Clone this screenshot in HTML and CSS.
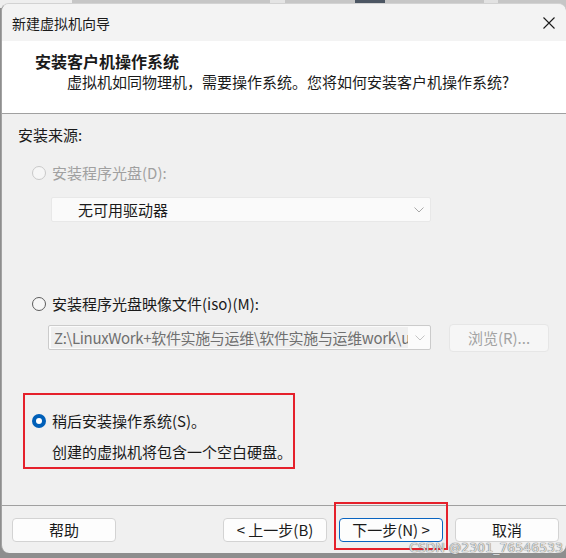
FILE: index.html
```html
<!DOCTYPE html>
<html lang="zh-CN">
<head>
<meta charset="utf-8">
<title>新建虚拟机向导</title>
<link rel="stylesheet" href="styles.css">
</head>
<body>
<div class="desktop">
  <div class="window">
    <div class="titlebar">
      <span class="title">新建虚拟机向导</span>
      <svg class="close" width="12" height="12" viewBox="0 0 12 12"><path d="M0.5 0.5 L11.5 11.5 M11.5 0.5 L0.5 11.5" stroke="#1b1b1b" stroke-width="1.1" fill="none"/></svg>
    </div>
    <div class="header">
      <div class="h-title">安装客户机操作系统</div>
      <div class="h-sub">虚拟机如同物理机，需要操作系统。您将如何安装客户机操作系统?</div>
    </div>
    <div class="body">
      <div class="label">安装来源:</div>
      <div class="radio-row disabled first">
        <span class="radio off-disabled"></span>
        <span>安装程序光盘(D):</span>
      </div>
      <div class="combo combo1">
        <span class="combo-text">无可用驱动器</span>
        <svg class="chev" width="10" height="6" viewBox="0 0 10 6"><path d="M0.5 0.5 L5 5 L9.5 0.5" stroke="#a9a9a9" stroke-width="1" fill="none"/></svg>
      </div>
      <div class="radio-row second">
        <span class="radio off"></span>
        <span>安装程序光盘映像文件(iso)(M):</span>
      </div>
      <div class="iso-row">
        <div class="combo combo2">
          <span class="combo-edit">Z:\LinuxWork+软件实施与运维\软件实施与运维work\u</span>
          <svg class="chev" width="10" height="6" viewBox="0 0 10 6"><path d="M0.5 0.5 L5 5 L9.5 0.5" stroke="#c4c4c4" stroke-width="1" fill="none"/></svg>
        </div>
        <div class="browse">浏览(R)...</div>
      </div>
      <div class="later">
        <div class="radio-row">
          <span class="radio on"></span>
          <span>稍后安装操作系统(S)。</span>
        </div>
        <div class="later-note">创建的虚拟机将包含一个空白硬盘。</div>
      </div>
    </div>
    <div class="footer">
      <div class="btn">帮助</div>
      <div class="spacer"></div>
      <div class="btn">&lt; 上一步(B)</div>
      <div class="btn primary">下一步(N) &gt;</div>
      <div class="btn">取消</div>
      <div class="mark"></div>
    </div>
  </div>
  <div class="watermark">CSDN @2301_76546533</div>
</div>
</body>
</html>
```

FILE: styles.css
```css
* { box-sizing: border-box; }
html, body { margin: 0; padding: 0; }
body {
  width: 566px;
  height: 558px;
  overflow: hidden;
  font-family: "Noto Sans CJK SC", "Noto Sans", sans-serif;
  color: #1a1a1a;
  background: #8e8e8e;
}
.desktop {
  position: relative;
  width: 566px;
  height: 558px;
  padding-top: 3px;
  background:
    linear-gradient(to right,
      #eeeeee 0, #eeeeee 72px,
      #c6c6c6 72px, #c6c6c6 270px,
      #e4e4e4 270px, #e4e4e4 285px,
      #c6c6c6 285px, #c6c6c6 355px,
      #4c5663 355px, #4c5663 385px,
      #c6c6c6 385px, #c6c6c6 484px,
      #e2e2e2 484px, #e2e2e2 498px,
      #c6c6c6 498px) top / 566px 8px no-repeat,
    #8e8e8e;
}
.window {
  margin-left: 1px;
  height: 550px;
  display: flex;
  flex-direction: column;
  background: #f0f0f0;
  border-left: 1px solid #a3a3a3;
  border-top: 1px solid #d2d2d2;
  border-radius: 8px 8px 8px 8px;
  overflow: hidden;
}
.titlebar {
  height: 37px;
  flex: none;
  display: flex;
  align-items: center;
  justify-content: space-between;
  padding: 0 11px 0 10px;
  background: #f3f3f3;
}
.title {
  font-size: 14px;
  line-height: 20px;
}
.close { display: block; }
.header {
  height: 73px;
  flex: none;
  background: #ffffff;
  border-bottom: 1px solid #a0a0a0;
  padding-top: 10px;
}
.h-title {
  font-size: 16px;
  font-weight: bold;
  line-height: 20px;
  padding-left: 33px;
}
.h-sub {
  font-size: 15px;
  line-height: 20px;
  padding-left: 65px;
  margin-top: 1px;
}
.body {
  flex: 1;
  font-size: 15px;
  line-height: 20px;
  padding-left: 16px;
}
.label {
  margin-top: 11px;
}
.radio-row {
  display: flex;
  align-items: center;
  gap: 6px;
  height: 20px;
}
.radio-row.first { margin-top: 18px; padding-left: 14px; }
.radio-row.second { margin-top: 72px; padding-left: 14px; }
.disabled { color: #a0a0a0; }
.radio {
  width: 14px;
  height: 14px;
  border-radius: 50%;
  flex: none;
  position: relative;
}
.radio.off-disabled { border: 1px solid #c9c9c9; background: #f6f6f6; }
.radio.off { border: 1px solid #5c5c5c; background: #f6f6f6; }
.radio.on { background: #005fb8; }
.radio.on::after {
  content: "";
  position: absolute;
  left: 4px;
  top: 4px;
  width: 6px;
  height: 6px;
  border-radius: 50%;
  background: #ffffff;
}
.combo {
  position: relative;
  height: 25px;
  display: flex;
  align-items: center;
  border-radius: 2px;
}
.combo1 {
  margin-top: 14px;
  margin-left: 33px;
  width: 380px;
  background: #fafafa;
  border: 1px solid #e8e8e8;
  padding-left: 26px;
}
.combo-text { color: #1a1a1a; }
.chev {
  position: absolute;
  right: 6px;
  top: 9px;
}
.iso-row {
  display: flex;
  align-items: flex-start;
  margin-top: 10px;
  margin-left: 30px;
}
.combo2 {
  margin-top: 1px;
  width: 383px;
  background: #fbfbfb;
  border: 1px solid #cbcbcb;
  padding-left: 2px;
  overflow: hidden;
}
.combo-edit {
  display: block;
  width: 357px;
  height: 21px;
  line-height: 21px;
  overflow: hidden;
  white-space: nowrap;
  background: #efefef;
  color: #707070;
  padding-left: 3px;
  letter-spacing: -0.35px;
}
.combo2 .chev { top: 9px; right: 5px; }
.browse {
  margin-left: 18px;
  width: 100px;
  height: 28px;
  line-height: 26px;
  text-align: center;
  background: #f6f6f6;
  border: 1px solid #e6e6e6;
  border-radius: 4px;
  color: #a3a3a3;
}
.later {
  margin-top: 41px;
  margin-left: 5px;
  width: 272px;
  height: 76px;
  border: 2px solid #e5202b;
  padding: 16px 0 0 7px;
}
.later-note {
  margin-top: 11px;
  padding-left: 20px;
}
.footer {
  position: relative;
  flex: none;
  height: 48px;
  border-top: 1px solid #a0a0a0;
  display: flex;
  align-items: flex-start;
  gap: 12px;
  padding: 12px 7px 0 10px;
  font-size: 15px;
}
.spacer { flex: 1; }
.btn {
  width: 104px;
  height: 24px;
  line-height: 22px;
  text-align: center;
  background: #fdfdfd;
  border: 1px solid #d3d3d3;
  border-radius: 4px;
  color: #1a1a1a;
}
.btn.primary {
  border-color: #0a64c0;
}
.mark {
  position: absolute;
  left: 332px;
  top: -4px;
  width: 114px;
  height: 48px;
  border: 2px solid #e5202b;
}
.watermark {
  position: absolute;
  right: 3px;
  bottom: 3px;
  font-family: "DejaVu Sans", sans-serif;
  font-size: 12.5px;
  line-height: 14px;
  color: rgba(236, 236, 236, 0.92);
  text-shadow: 0 0 1px #6a6a6a, 0 0 1px #6a6a6a;
}
```
